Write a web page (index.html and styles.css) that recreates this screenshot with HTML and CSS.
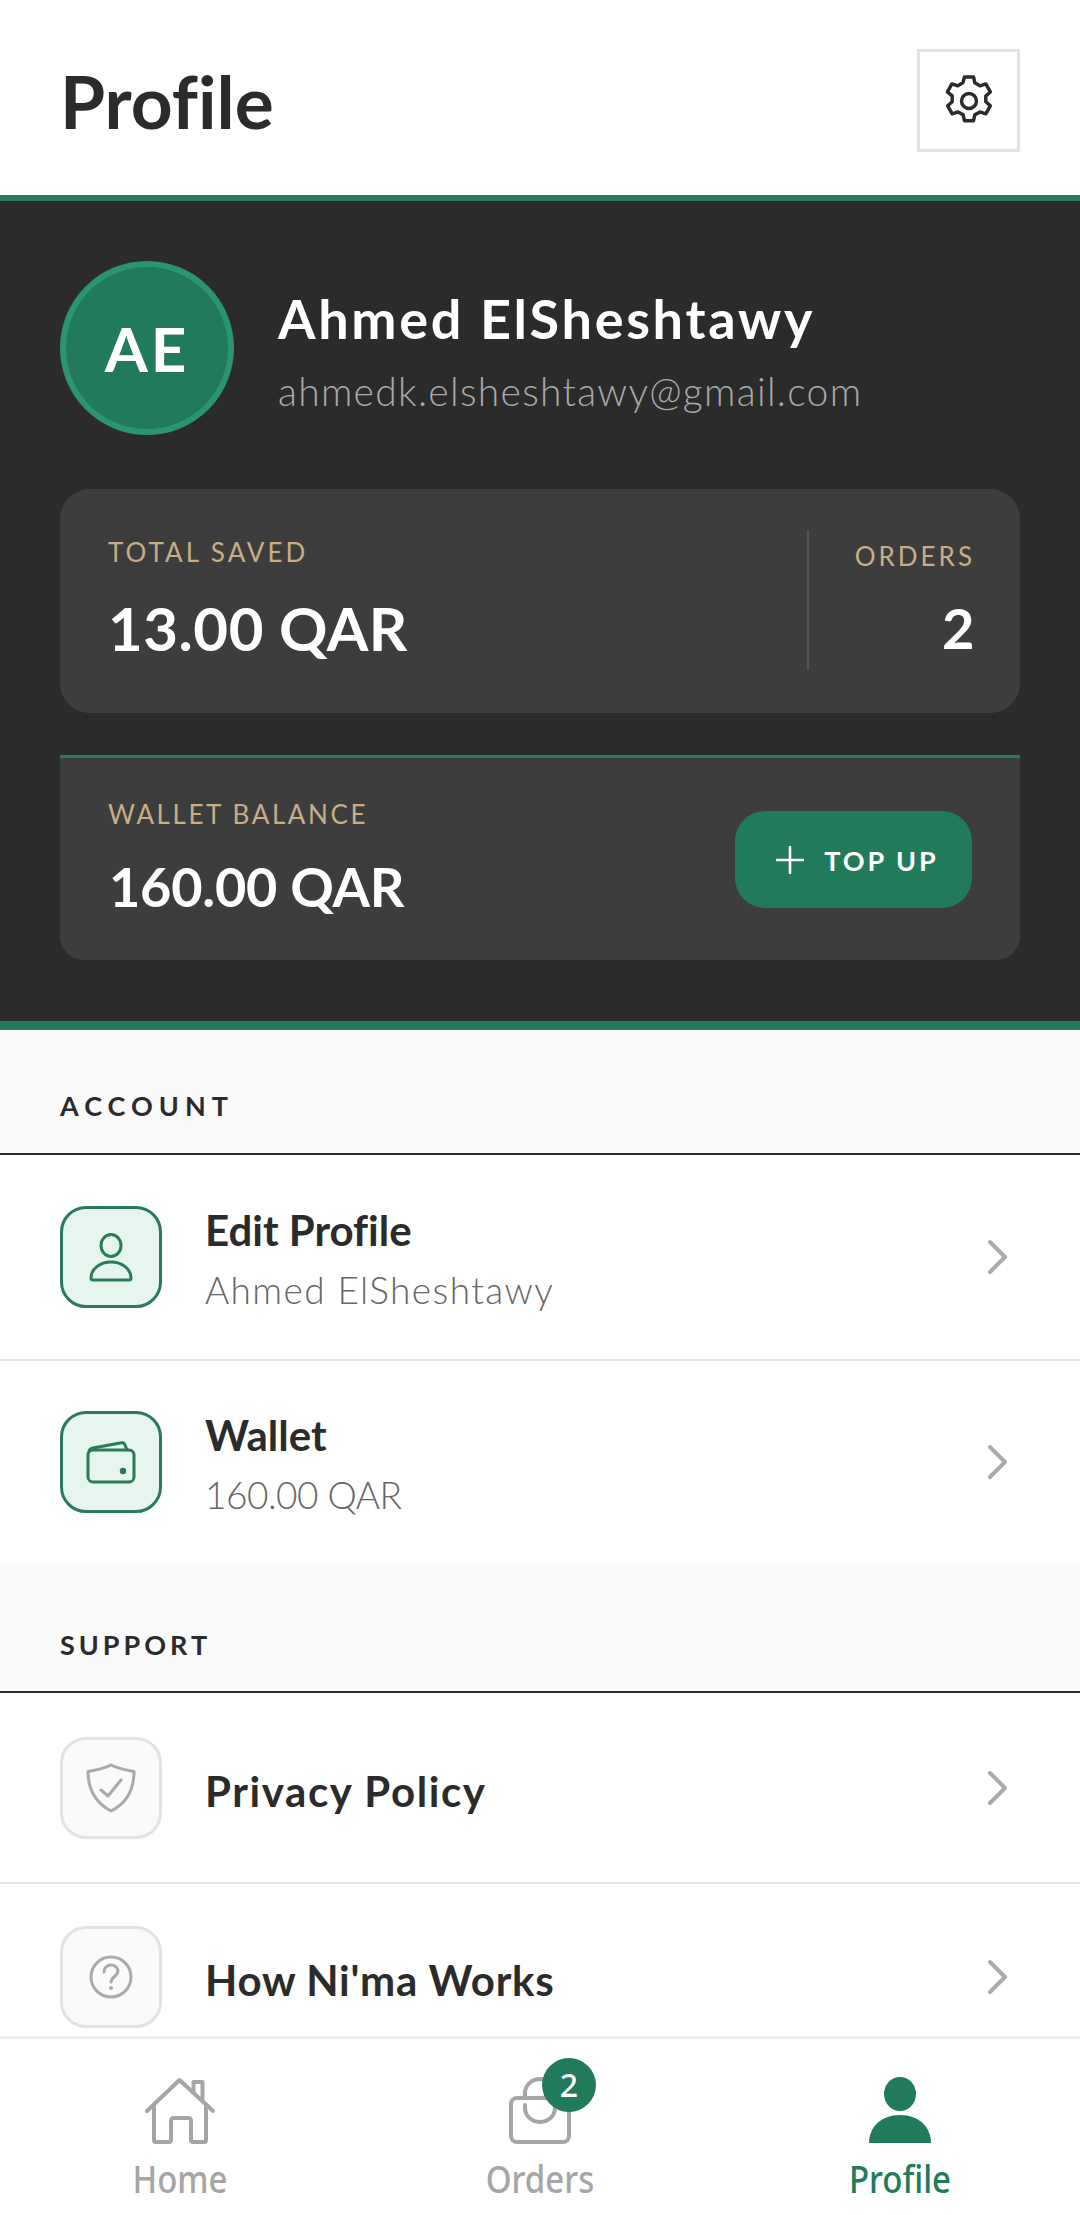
FILE: index.html
```html
<!DOCTYPE html>
<html lang="en">
<head>
<meta charset="UTF-8">
<meta name="viewport" content="width=device-width, initial-scale=1.0">
<title>Profile</title>
<link rel="stylesheet" href="styles.css">
</head>
<body>
<div class="app">
    <div class="scroll">
        <header class="topbar">
            <h1>Profile</h1>
            <button class="settings">
                <svg width="64" height="64" viewBox="0 0 24 24" fill="none" stroke="#2b2b2b" stroke-width="1.3" stroke-linecap="round" stroke-linejoin="round"><path d="M10.3 3h3.4l.5 2.2 1.9 1.1 2.2-.7 1.7 3-1.7 1.5v2.2l1.7 1.5-1.7 3-2.2-.7-1.9 1.1-.5 2.2h-3.4l-.5-2.2-1.9-1.1-2.2.7-1.7-3 1.7-1.5v-2.2L3.9 8.6l1.7-3 2.2.7 1.9-1.1z"/><circle cx="12" cy="12" r="2.8"/></svg>
            </button>
        </header>

        <section class="hero">
            <div class="user">
                <div class="avatar">AE</div>
                <div>
                    <div class="user-name">Ahmed ElSheshtawy</div>
                    <div class="user-email">ahmedk.elsheshtawy@gmail.com</div>
                </div>
            </div>

            <div class="stats">
                <div class="stat-main">
                    <div class="label">TOTAL SAVED</div>
                    <div class="amount">13.00 QAR</div>
                </div>
                <div class="stat-side">
                    <div class="label">ORDERS</div>
                    <div class="amount">2</div>
                </div>
            </div>

            <div class="wallet">
                <div>
                    <div class="label">WALLET BALANCE</div>
                    <div class="amount">160.00 QAR</div>
                </div>
                <button class="topup">
                    <svg width="28" height="28" viewBox="0 0 28 28" stroke="#fff" stroke-width="2.6" stroke-linecap="round"><path d="M14 1v26M1 14h26"/></svg>
                    TOP UP
                </button>
            </div>
        </section>

        <div class="section-title">ACCOUNT</div>
        <div class="list">
            <div class="row">
                <div class="row-icon green">
                    <svg width="50" height="50" viewBox="0 0 50 50" fill="none" stroke="#2a7a5c" stroke-width="3"><ellipse cx="25" cy="13.5" rx="10" ry="11"/><path d="M5 46c0-9 9-16 20-16s20 7 20 16c0 1-.5 2-2 2H7c-1.500 0-2-1-2-2z"/></svg>
                </div>
                <div class="row-text">
                    <div class="row-title">Edit Profile</div>
                    <div class="row-sub">Ahmed ElSheshtawy</div>
                </div>
                <svg class="chevron" width="24" height="36" viewBox="0 0 24 36" fill="none" stroke="#aaa" stroke-width="4" stroke-linecap="round" stroke-linejoin="round"><path d="M4 3l15 15L4 33"/></svg>
            </div>
            <div class="row">
                <div class="row-icon green">
                    <svg width="50" height="46" viewBox="0 0 50 46" fill="none" stroke="#2a7a5c" stroke-width="3" stroke-linejoin="round"><rect x="2" y="11" width="46" height="32" rx="5"/><path d="M3 13q0-3 4-4l27-5q4-1 5 2l2 5"/><circle cx="37" cy="32" r="3.200" fill="#2a7a5c" stroke="none"/></svg>
                </div>
                <div class="row-text">
                    <div class="row-title">Wallet</div>
                    <div class="row-sub row-sub-tight">160.00 QAR</div>
                </div>
                <svg class="chevron" width="24" height="36" viewBox="0 0 24 36" fill="none" stroke="#aaa" stroke-width="4" stroke-linecap="round" stroke-linejoin="round"><path d="M4 3l15 15L4 33"/></svg>
            </div>
        </div>

        <div class="section-title section-title-support">SUPPORT</div>
        <div class="list">
            <div class="row row-plain">
                <div class="row-icon grey">
                    <svg width="50" height="50" viewBox="0 0 50 50" fill="none" stroke="#aaa" stroke-width="3" stroke-linecap="round" stroke-linejoin="round"><path d="M25 2c6 3 14 5 23 6.500 0 18-8 32-23 39.500C10 40 2 26.500 2 8.500 11 7 19 5 25 2z"/><path d="M15 27l7 6 13-16"/></svg>
                </div>
                <div class="row-text">
                    <div class="row-title row-title-wide">Privacy Policy</div>
                </div>
                <svg class="chevron" width="24" height="36" viewBox="0 0 24 36" fill="none" stroke="#aaa" stroke-width="4" stroke-linecap="round" stroke-linejoin="round"><path d="M4 3l15 15L4 33"/></svg>
            </div>
            <div class="row row-plain">
                <div class="row-icon grey">
                    <svg width="44" height="44" viewBox="0 0 44 44" fill="none" stroke="#aaa" stroke-width="3" stroke-linecap="round"><circle cx="22" cy="22" r="20"/><path d="M15 17c0-4 3-7 7-7s7 3 7 6c0 5-7 6-7 11"/><circle cx="22" cy="33" r="2" fill="#aaa" stroke="none"/></svg>
                </div>
                <div class="row-text">
                    <div class="row-title row-title-mid">How Ni'ma Works</div>
                </div>
                <svg class="chevron" width="24" height="36" viewBox="0 0 24 36" fill="none" stroke="#aaa" stroke-width="4" stroke-linecap="round" stroke-linejoin="round"><path d="M4 3l15 15L4 33"/></svg>
            </div>
        </div>
    </div>

    <nav class="tabbar">
        <div class="tab">
            <svg width="72" height="68" viewBox="0 0 72 68" fill="none" stroke="#a5a5a5" stroke-width="4" stroke-linejoin="round" stroke-linecap="round"><path d="M3 34L35.500 3 69 34"/><path d="M49.500 15V5h9v19"/><path d="M10 28v35q0 2 2 2h13q2 0 2-2V44q0-3 3-3h14q3 0 3 3v19q0 2 2 2h11q2 0 2-2V28"/></svg>
            <span>Home</span>
        </div>
        <div class="tab">
            <div class="tab-icon">
                <svg width="62" height="68" viewBox="0 0 62 68" fill="none" stroke="#a5a5a5" stroke-width="4" stroke-linecap="round"><rect x="2" y="21" width="58" height="44" rx="6"/><path d="M16 21v-5a15 14 0 0 1 30 0v5"/><path d="M16 28v3a15 14 0 0 0 30 0v-3"/></svg>
                <div class="badge">2</div>
            </div>
            <span>Orders</span>
        </div>
        <div class="tab tab-active">
            <svg width="62" height="68" viewBox="0 0 62 68" fill="#217a5a"><ellipse cx="31" cy="17" rx="16" ry="17"/><path d="M0 66c0-16 12-28 31-28s31 12 31 28z"/></svg>
            <span>Profile</span>
        </div>
    </nav>
</div>
</body>
</html>
```

FILE: styles.css
```css
* {
    box-sizing: border-box;
}
html, body {
    margin: 0;
    padding: 0;
}
body {
    font-family: Lato, "Open Sans", sans-serif;
    font-variant-ligatures: none;
    background-color: #fff;
    color: #2b2b2b;
}
.app {
    height: 100vh;
    display: flex;
    flex-direction: column;
    overflow: hidden;
}
.scroll {
    flex: 1;
    min-height: 0;
    overflow: hidden;
    background-color: #fafafa;
}

/* top bar */
.topbar {
    height: 195px;
    padding: 6px 60px 0;
    display: flex;
    justify-content: space-between;
    align-items: center;
    background-color: #fff;
}
.topbar h1 {
    margin: 0;
    font-size: 73px;
    font-weight: 700;
}
.settings {
    width: 103px;
    height: 103px;
    padding: 0;
    display: flex;
    justify-content: center;
    align-items: center;
    background: #fff;
    border: 3px solid #e3e3e3;
}

/* dark block */
.hero {
    height: 835px;
    padding: 60px 60px 0;
    background-color: #2b2b2b;
    border-top: 6px solid #2a7a5c;
    border-bottom: 9px solid #217a5a;
}
.user {
    display: flex;
    align-items: center;
    gap: 44px;
}
.avatar {
    width: 174px;
    height: 174px;
    flex-shrink: 0;
    display: flex;
    justify-content: center;
    align-items: center;
    border-radius: 50%;
    background-color: #217a5a;
    border: 6px solid #2b9470;
    color: #fff;
    font-size: 62px;
    font-weight: 700;
    letter-spacing: 3px;
}
.user-name {
    margin-top: 4px;
    color: #fff;
    font-size: 54px;
    font-weight: 700;
    letter-spacing: 2.7px;
}
.user-email {
    margin-top: 17px;
    color: #aaa;
    font-size: 39px;
    font-weight: 300;
    letter-spacing: 1.3px;
}
.label {
    color: #c8ad85;
    font-size: 26px;
    letter-spacing: 3px;
}
.amount {
    margin-top: 24px;
    color: #fff;
    font-size: 60px;
    font-weight: 700;
    line-height: 72px;
    letter-spacing: 0.5px;
}
.stats {
    height: 224px;
    margin-top: 54px;
    padding: 41px 48px 0;
    display: flex;
    background-color: #3d3d3d;
    border-radius: 30px;
}
.stat-main {
    flex: 1;
    padding-top: 6px;
}
.stat-side {
    height: 140px;
    padding: 10px 0 0 46px;
    border-left: 2px solid #565656;
    text-align: right;
}
.stat-side .label {
    margin-right: -3px;
}
.stat-side .amount {
    margin: 20px -3px 0 0;
    font-size: 56px;
}
.wallet {
    height: 205px;
    margin-top: 42px;
    padding: 0 48px;
    display: flex;
    justify-content: space-between;
    align-items: center;
    background-color: #3d3d3d;
    border-top: 3px solid #2a7a5c;
    border-radius: 0 0 24px 24px;
}
.wallet .label {
    letter-spacing: 2.6px;
}
.wallet .amount {
    margin-left: 1px;
    font-size: 54px;
    line-height: 66px;
    letter-spacing: -0.2px;
}
.topup {
    width: 237px;
    height: 97px;
    display: flex;
    justify-content: center;
    align-items: center;
    gap: 20px;
    padding: 2px 0 0 8px;
    background-color: #217a5a;
    border: none;
    border-radius: 30px;
    color: #fff;
    font-family: inherit;
    font-size: 27px;
    font-weight: 700;
    letter-spacing: 3px;
}
.topup svg {
    flex-shrink: 0;
}

/* lists */
.section-title {
    height: 125px;
    padding: 59px 60px 0;
    border-bottom: 2px solid #2b2b2b;
    background-color: #fafafa;
    font-size: 27px;
    font-weight: 700;
    letter-spacing: 6px;
}
.section-title-support {
    height: 130px;
    padding-top: 65px;
    letter-spacing: 4px;
}
.list {
    background-color: #fff;
}
.row {
    height: 204px;
    padding: 0 60px;
    display: flex;
    align-items: center;
    gap: 43px;
    border-top: 2px solid #e5e5e5;
}
.row:first-child {
    border-top: none;
}
.row-plain {
    height: 188px;
}
.row-plain:first-child {
    height: 189px;
}
.row-plain .row-text {
    padding-top: 6px;
}
.row-icon {
    width: 102px;
    height: 102px;
    flex-shrink: 0;
    display: flex;
    justify-content: center;
    align-items: center;
    border-radius: 26px;
}
.row-icon.green {
    background-color: #e6f6ef;
    border: 3px solid #2a7a5c;
}
.row-icon.grey {
    background-color: #fafafa;
    border: 3px solid #e3e3e3;
}
.row-text {
    flex: 1;
    padding-top: 3px;
}
.row-title {
    font-size: 42px;
    font-weight: 700;
}
.row-title-wide {
    letter-spacing: 1.6px;
}
.row-title-mid {
    letter-spacing: 0.7px;
}
.row-sub {
    margin-top: 12px;
    color: #666;
    font-size: 37px;
    font-weight: 300;
    letter-spacing: 1.4px;
}
.row-sub-tight {
    letter-spacing: -0.5px;
}
.chevron {
    margin-right: 10px;
}

/* bottom tabs */
.tabbar {
    height: 179px;
    padding-top: 38px;
    display: flex;
    justify-content: space-around;
    background-color: #fff;
    border-top: 3px solid #eee;
}
.tab {
    width: 361px;
    display: flex;
    flex-direction: column;
    align-items: center;
    gap: 12px;
    color: #a5a5a5;
    font-family: "Noto Sans", sans-serif;
    font-size: 33px;
    font-weight: 500;
    line-height: 44px;
}
.tab span {
    display: inline-block;
    transform: scaleY(1.15);
}
.tab-active {
    color: #217a5a;
}
.tab-icon {
    position: relative;
    height: 68px;
}
.badge {
    position: absolute;
    top: -19px;
    left: 33px;
    width: 54px;
    height: 54px;
    display: flex;
    justify-content: center;
    align-items: center;
    border-radius: 50%;
    background-color: #217a5a;
    color: #fff;
    font-size: 32px;
}
```
